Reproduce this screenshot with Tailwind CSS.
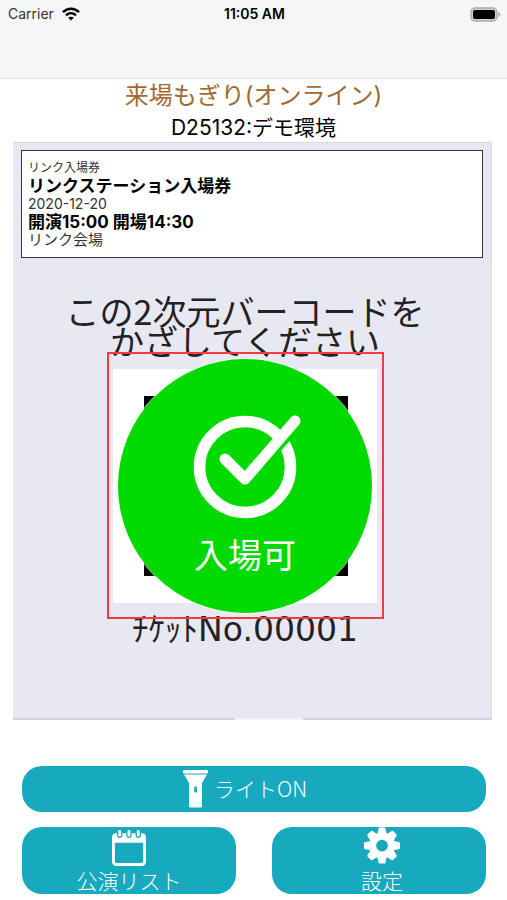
<!DOCTYPE html>
<html lang="ja">
<head>
    <meta charset="UTF-8">
    <meta name="viewport" content="width=device-width, initial-scale=1.0">
    <title>来場もぎり(オンライン)</title>
    <script src="https://cdn.jsdelivr.net/npm/@tailwindcss/browser@4"></script>
</head>
<body class="bg-white text-black font-['Inter','Noto_Sans_CJK_JP',sans-serif]">

    <!-- ステータスバー -->
    <header class="h-[79px] bg-[#f6f6f7] border-b border-[#dfdfe1]">
        <div class="grid grid-cols-3 items-center h-7 pl-2 pr-1.5 text-sm">
            <div class="flex items-center gap-2 text-[#333]">
                <span>Carrier</span>
                <svg class="w-[18px] h-[14px]" viewBox="0 0 18 14" fill="none" stroke="#000" stroke-width="2.5">
                    <path d="M1 5.2C5.6 .6 12.4 .6 17 5.2"/>
                    <path d="M4 8.4c2.9-2.8 7.1-2.8 10 0"/>
                    <path d="M9 13.6 6.2 10.8c1.6-1.5 4-1.5 5.6 0z" fill="#000" stroke="none"/>
                </svg>
            </div>
            <span class="text-center font-semibold">11:05 AM</span>
            <svg class="justify-self-end w-[31px] h-[15px]" viewBox="0 0 31 15">
                <rect x="1" y="1" width="26" height="13" rx="4" fill="#d4d4d4" stroke="#aaa" stroke-width="1.4"/>
                <rect x="3" y="3" width="22" height="9" rx="2" fill="#000"/>
                <path d="M28.5 5c2.4.9 2.4 4.1 0 5z" fill="#aaa"/>
            </svg>
        </div>
    </header>

    <main>
        <h1 class="text-center text-2xl leading-[34px] text-[#a06a30]">来場もぎり(オンライン)</h1>
        <p class="text-center text-[21px] leading-[29px]">D25132:デモ環境</p>

        <!-- カメラ映像 -->
        <section class="ml-[13px] mr-[15px] px-2 pt-[7px] bg-[#e8e8f2] border-r border-t border-[#d8d8e4]">
            <div class="bg-white border border-[#333] px-1.5 py-2">
                <p class="text-xs leading-[18px] text-[#333]">リンク入場券</p>
                <p class="text-[17px] leading-[18px] font-bold">リンクステーション入場券</p>
                <p class="text-sm leading-[18px] text-[#333]">2020-12-20</p>
                <p class="text-[17px] leading-[18px] font-bold">開演15:00 開場14:30</p>
                <p class="text-[15px] leading-[18px] text-[#333]">リンク会場</p>
            </div>

            <div class="flex flex-col items-center pt-[38px] pr-3.5 text-[#222]">
                <p class="text-[34px] leading-[30px] text-center font-['Noto_Sans_CJK_JP',sans-serif]">この2次元バーコードを<br>かざしてください</p>

                <div class="relative grid place-items-center -mt-1 w-[277px] h-[267px] border-2 border-[#f23a3f]">
                    <svg class="col-start-1 row-start-1 w-[264px] h-[234px]" viewBox="0 0 264 234">
                        <rect width="264" height="234" fill="#fff"/>
                        <path d="M31 27h30v30H31zM205 27h30v30h-30zM31 177h30v30H31zM205 177h30v30h-30z" fill="#000"/>
                    </svg>
                    <div class="col-start-1 row-start-1 flex flex-col items-center w-[254px] h-[254px] pt-[55px] rounded-full bg-[#00da00] ring-1 ring-white/60 text-white">
                        <svg class="w-[114px] h-[106px]" viewBox="0 0 114 106" fill="none">
                            <circle cx="57" cy="53" r="45.5" stroke="#fff" stroke-width="11.5"/>
                            <path d="M59 68 109 10" stroke="#00da00" stroke-width="11"/>
                            <path d="M37 45 57 65 107 7" stroke="#fff" stroke-width="11" stroke-linecap="round" stroke-linejoin="round"/>
                        </svg>
                        <span class="mt-[18px] text-[34px] leading-9">入場可</span>
                    </div>
                </div>

                <p class="-mt-1 text-[33px] leading-[30px] font-['DejaVu_Sans','Noto_Sans_CJK_JP',sans-serif]">ﾁｹｯﾄNo.00001</p>
            </div>

            <div class="flex mt-[73px] -mx-2 h-0.5">
                <span class="grow-[222] bg-[#d4d4e0]"></span>
                <span class="grow-[69] bg-[#f4f4f9]"></span>
                <span class="grow-[188] bg-[#d4d4e0]"></span>
            </div>
        </section>
    </main>

    <!-- 操作ボタン -->
    <footer class="grid grid-cols-2 gap-x-9 gap-y-[15px] mt-[46px] mb-1 pl-[22px] pr-[21px] text-[21px] font-light text-white font-['Noto_Sans_CJK_JP',sans-serif]">
        <button type="button" class="col-span-2 flex items-center justify-center gap-1.5 h-[46px] pr-[18px] rounded-[20px] bg-[#17a9bd]">
            <svg class="w-[25px] h-[38px]" viewBox="0 0 25 38" fill="#fff">
                <rect width="25" height="3.4" rx="1"/>
                <path d="M1 4.6h23l-5 8.400v23q0 1.500-1.500 1.500h-10Q6 37.500 6 36V13z"/>
                <rect x="11.2" y="16.5" width="2.8" height="6" rx="1" fill="#17a9bd"/>
            </svg>
            <span>ライトON</span>
        </button>
        <button type="button" class="flex flex-col items-center h-[67px] pt-0.5 rounded-[20px] bg-[#17a9bd]">
            <svg class="w-9 h-[38px]" viewBox="0 0 36 38" fill="none">
                <rect x="2" y="6" width="32" height="30.5" rx="3" stroke="#fff" stroke-width="3"/>
                <path d="M1 7q0-2.500 2.500-2.500h29Q35 4.500 35 7v7H1z" fill="#fff"/>
                <path d="M8.500 2.500v4M18 2.500v4M27.500 2.500v4" stroke="#17a9bd" stroke-width="5.5" stroke-linecap="round"/>
                <path d="M8.500 2.500v4M18 2.500v4M27.500 2.500v4" stroke="#fff" stroke-width="3" stroke-linecap="round"/>
            </svg>
            <span class="leading-7">公演リスト</span>
        </button>
        <button type="button" class="flex flex-col items-center h-[67px] pl-1.5 rounded-[20px] bg-[#17a9bd]">
            <svg class="w-[38px] h-10" viewBox="-19 -19 38 40" fill="#fff">
                <g stroke="#fff" stroke-width="2" stroke-linejoin="round">
                    <path id="tooth" d="M-4-11-2.500-17.500h5L4-11v22L2.500 17.500h-5L-4 11z"/>
                    <use href="#tooth" transform="rotate(45)"/>
                    <use href="#tooth" transform="rotate(90)"/>
                    <use href="#tooth" transform="rotate(135)"/>
                </g>
                <circle r="13"/>
                <circle r="6" fill="#17a9bd"/>
            </svg>
            <span class="leading-7">設定</span>
        </button>
    </footer>

</body>
</html>
